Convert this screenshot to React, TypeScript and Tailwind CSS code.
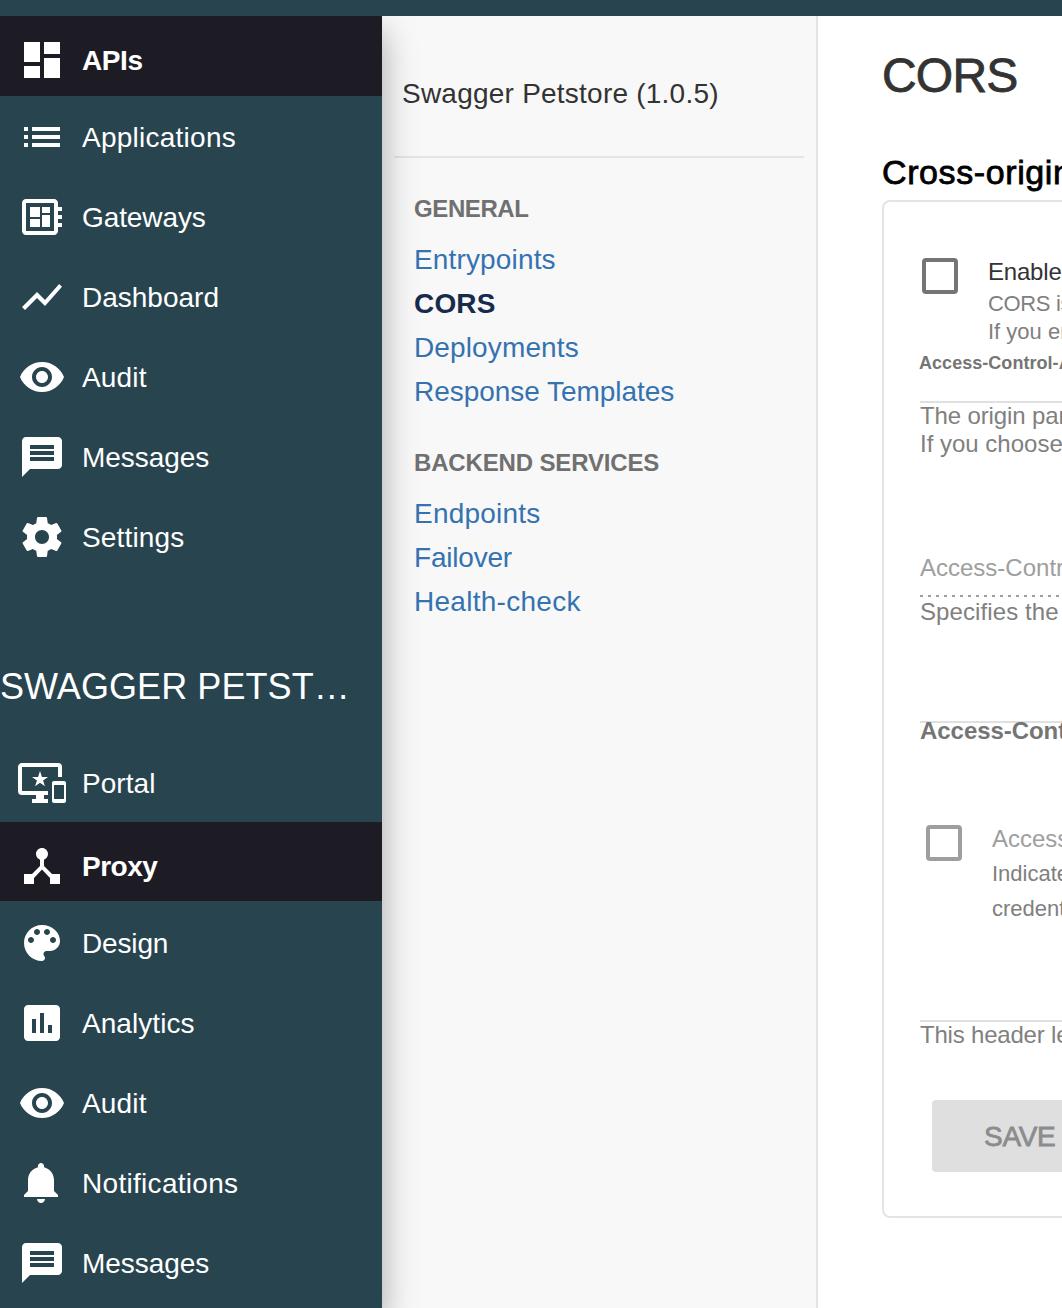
import React from 'react'
import {
  MdDashboard,
  MdDeveloperBoard,
  MdShowChart,
  MdVisibility,
  MdMessage,
  MdImportantDevices,
  MdDeviceHub,
} from 'react-icons/md'

const icon = 'size-12 shrink-0'

function Glyph({ d }: { d: string }) {
  return (
    <svg viewBox="0 0 24 24" fill="currentColor" className={icon}>
      <path d={d} />
    </svg>
  )
}

const LIST = 'M3 13h2v-2H3v2zm0 4h2v-2H3v2zm0-8h2V7H3v2zm4 4h14v-2H7v2zm0 4h14v-2H7v2zM7 7v2h14V7H7z'
const GEAR =
  'M19.43 12.98c.04-.32.07-.64.07-.98s-.03-.66-.07-.98l2.11-1.65c.19-.15.24-.42.12-.64l-2-3.46c-.12-.22-.39-.3-.61-.22l-2.49 1c-.52-.4-1.08-.73-1.69-.98l-.38-2.65C14.46 2.18 14.25 2 14 2h-4c-.25 0-.46.18-.49.42l-.38 2.65c-.61.25-1.17.59-1.69.98l-2.49-1c-.23-.09-.49 0-.61.22l-2 3.46c-.13.22-.07.49.12.64l2.11 1.65c-.04.32-.07.65-.07.98s.03.66.07.98l-2.11 1.65c-.19.15-.24.42-.12.64l2 3.46c.12.22.39.3.61.22l2.49-1c.52.4 1.08.73 1.69.98l.38 2.65c.03.24.24.42.49.42h4c.25 0 .46-.18.49-.42l.38-2.65c.61-.25 1.17-.59 1.69-.98l2.49 1c.23.09.49 0 .61-.22l2-3.46c.12-.22.07-.49-.12-.64l-2.11-1.65zM12 15.5c-1.93 0-3.5-1.57-3.5-3.5s1.57-3.5 3.5-3.5 3.5 1.57 3.5 3.5-1.57 3.5-3.5 3.5z'
const PALETTE =
  'M12 3c-4.97 0-9 4.03-9 9s4.03 9 9 9c.83 0 1.5-.67 1.5-1.5 0-.39-.15-.74-.39-1.01-.23-.26-.38-.61-.38-.99 0-.83.67-1.5 1.5-1.5H16c2.76 0 5-2.24 5-5 0-4.42-4.03-8-9-8zm-5.5 9c-.83 0-1.5-.67-1.5-1.5S5.67 9 6.5 9 8 9.67 8 10.5 7.33 12 6.5 12zm3-4C8.67 8 8 7.33 8 6.5S8.67 5 9.5 5s1.5.67 1.5 1.5S10.33 8 9.5 8zm5 0c-.83 0-1.5-.67-1.5-1.5S13.67 5 14.5 5s1.5.67 1.5 1.5S15.33 8 14.5 8zm3 4c-.83 0-1.5-.67-1.5-1.5S16.67 9 17.5 9s1.5.67 1.5 1.5-.67 1.5-1.5 1.5z'
const CHART =
  'M19 3H5c-1.1 0-2 .9-2 2v14c0 1.1.9 2 2 2h14c1.1 0 2-.9 2-2V5c0-1.1-.9-2-2-2zM9 17H7v-7h2v7zm4 0h-2V7h2v10zm4 0h-2v-4h2v4z'
const BELL =
  'M11.5 22c1.1 0 2-.9 2-2h-4c0 1.1.9 2 2 2zm6.5-6v-5.5c0-3.07-2.13-5.64-5-6.32V3.5c0-.83-.67-1.5-1.5-1.5S10 2.67 10 3.5v.68c-2.87.68-5 3.25-5 6.32V16l-2 2v1h17v-1l-2-2z'

type Item = { label: string; glyph: React.ReactNode; tracking: string; row?: string }

const mainItems: Item[] = [
  { label: 'APIs', glyph: <MdDashboard className={icon} />, tracking: 'tracking-[-0.39px]', row: 'h-20 pt-2 mb-px bg-[#1d1c25] font-bold' },
  { label: 'Applications', glyph: <Glyph d={LIST} />, tracking: 'tracking-[0.25px]' },
  { label: 'Gateways', glyph: <MdDeveloperBoard className={icon} />, tracking: 'tracking-[-0.1px]' },
  { label: 'Dashboard', glyph: <MdShowChart className={icon} />, tracking: 'tracking-[0px]' },
  { label: 'Audit', glyph: <MdVisibility className={icon} />, tracking: 'tracking-[0.16px]' },
  { label: 'Messages', glyph: <MdMessage className={icon} />, tracking: 'tracking-[-0.06px]' },
  { label: 'Settings', glyph: <Glyph d={GEAR} />, tracking: 'tracking-[0.16px]' },
]

const apiItems: Item[] = [
  { label: 'Portal', glyph: <MdImportantDevices className={icon} />, tracking: 'tracking-[0.05px]' },
  { label: 'Proxy', glyph: <MdDeviceHub className={icon} />, tracking: 'tracking-[-0.5px]', row: 'h-[79px] pt-[9px] -mt-px mb-[2px] bg-[#1d1c25] font-bold' },
  { label: 'Design', glyph: <Glyph d={PALETTE} />, tracking: 'tracking-[-0.15px]' },
  { label: 'Analytics', glyph: <Glyph d={CHART} />, tracking: 'tracking-[0.06px]' },
  { label: 'Audit', glyph: <MdVisibility className={icon} />, tracking: 'tracking-[0.16px]' },
  { label: 'Notifications', glyph: <Glyph d={BELL} />, tracking: 'tracking-[0.3px]' },
  { label: 'Messages', glyph: <MdMessage className={icon} />, tracking: 'tracking-[-0.06px]' },
]

function Nav({ items }: { items: Item[] }) {
  return (
    <nav className="flex flex-col text-[28px] leading-9">
      {items.map((it) => (
        <a key={it.label} className={`flex shrink-0 items-center gap-4 pl-[18px] ${it.row ?? 'h-20'}`}>
          {it.glyph}
          <span className={`pt-[2px] ${it.tracking}`}>{it.label}</span>
        </a>
      ))}
    </nav>
  )
}

const general = [
  { label: 'Entrypoints', cls: 'tracking-[0.15px]' },
  { label: 'CORS', cls: 'tracking-[0.16px] font-bold text-[#172b4d]' },
  { label: 'Deployments', cls: 'tracking-[0.13px]' },
  { label: 'Response Templates', cls: 'tracking-[-0.04px]' },
]
const backend = [
  { label: 'Endpoints', cls: 'tracking-[0.22px]' },
  { label: 'Failover', cls: 'tracking-[-0.2px]' },
  { label: 'Health-check', cls: 'tracking-[0.28px]' },
]

function Links({ items }: { items: { label: string; cls: string }[] }) {
  return (
    <ul className="mt-[17px] text-[28px] leading-[44px] text-[#3572b0]">
      {items.map((l) => (
        <li key={l.label} className={l.cls}>
          {l.label}
        </li>
      ))}
    </ul>
  )
}

const medium = 'font-normal [-webkit-text-stroke:0.8px_currentColor]'

export default function App() {
  return (
    <div className="flex h-[1308px] w-full flex-col overflow-hidden bg-white font-['Liberation_Sans',Arial,sans-serif] whitespace-nowrap">
      <header className="relative z-20 h-4 shrink-0 bg-[#28444f]" />
      <div className="flex min-h-0 flex-1">
        <aside className="relative z-10 w-[382px] shrink-0 bg-[#28444f] text-white shadow-[0_16px_32px_rgba(0,0,0,0.34)]">
          <Nav items={mainItems} />
          <h2 className="mt-[90px] mb-9 h-10 text-[36px] leading-10 tracking-[0.08px]">SWAGGER PETST…</h2>
          <Nav items={apiItems} />
        </aside>

        <section className="w-[436px] shrink-0 border-r-2 border-[#e1e5e9] bg-[#f8f8f8]">
          <div className="mx-3 h-[142px] border-b-2 border-[#e1e5e9] pt-[60px] pl-2 text-[28px] leading-9 tracking-[0.23px] text-[#333]">
            Swagger Petstore (1.0.5)
          </div>
          <div className="pt-[39px] pl-8 text-[#707070]">
            <h3 className="text-[24px] leading-6 font-bold tracking-[-0.4px]">GENERAL</h3>
            <Links items={general} />
            <h3 className="mt-[37px] text-[24px] leading-6 font-bold tracking-[-0.15px]">BACKEND SERVICES</h3>
            <Links items={backend} />
          </div>
        </section>

        <main className="min-w-0 flex-1 overflow-hidden pl-16">
          <h1 className={`mt-[30px] text-[48px] leading-[60px] tracking-[-0.8px] text-[#333] ${medium}`}>CORS</h1>
          <h2 className={`mt-[46px] text-[34px] leading-10 tracking-[0.6px] text-black ${medium}`}>Cross-origin</h2>
          <div className="mt-2 h-[1018px] w-[400px] rounded-lg border-2 border-[#e1e5e9] pl-9 text-[24px] leading-7 text-[#808080]">
            <div className="mt-14 flex gap-[30px] pl-[2px]">
              <span className="size-9 shrink-0 rounded-[4px] border-4 border-[#757575]" />
              <div>
                <p className="tracking-[-0.2px] text-[#333]">Enable</p>
                <p className="mt-1 text-[22px] tracking-[-0.35px]">CORS is</p>
                <p className="text-[22px] tracking-[0px]">If you enable</p>
              </div>
            </div>
            <p className="mt-[7px] -ml-px text-[18px] leading-5 font-bold tracking-[0.04px] text-[#757575]">Access-Control-Allow</p>
            <div className="mt-7 h-[2px] bg-[#e0e0e0]" />
            <p className="-mt-px tracking-[-0.13px]">The origin parameter</p>
            <p>If you choose</p>
            <p className="mt-24 text-[#9e9e9e]">Access-Control</p>
            <div className="mt-[13px] h-[2px] bg-[repeating-linear-gradient(90deg,#9e9e9e_0,#9e9e9e_3px,transparent_3px,transparent_8px)]" />
            <p className="mt-px tracking-[0.1px]">Specifies the</p>
            <div className="mt-[95px] h-[2px] bg-[#e0e0e0]" />
            <p className="-mt-[6px] font-bold tracking-[-0.05px] text-[#757575]">Access-Control</p>
            <div className="mt-20 flex gap-[30px] pl-[6px]">
              <span className="size-9 shrink-0 rounded-[4px] border-4 border-[#9e9e9e]" />
              <div>
                <p className="text-[#9e9e9e]">Access</p>
                <div className="mt-[3px] text-[22px] leading-[35px]">
                  <p>Indicates</p>
                  <p>credentials</p>
                </div>
              </div>
            </div>
            <div className="mt-[94px] h-[2px] bg-[#e0e0e0]" />
            <p className="-mt-px tracking-[-0.2px]">This header lets</p>
            <button className={`mt-[51px] ml-3 block h-[72px] w-[200px] rounded-[4px] bg-[#dfdfdf] pt-[2px] pl-[52px] text-left text-[28px] tracking-[-0.3px] text-[#8c8c8c] ${medium}`}>
              SAVE
            </button>
          </div>
        </main>
      </div>
    </div>
  )
}
